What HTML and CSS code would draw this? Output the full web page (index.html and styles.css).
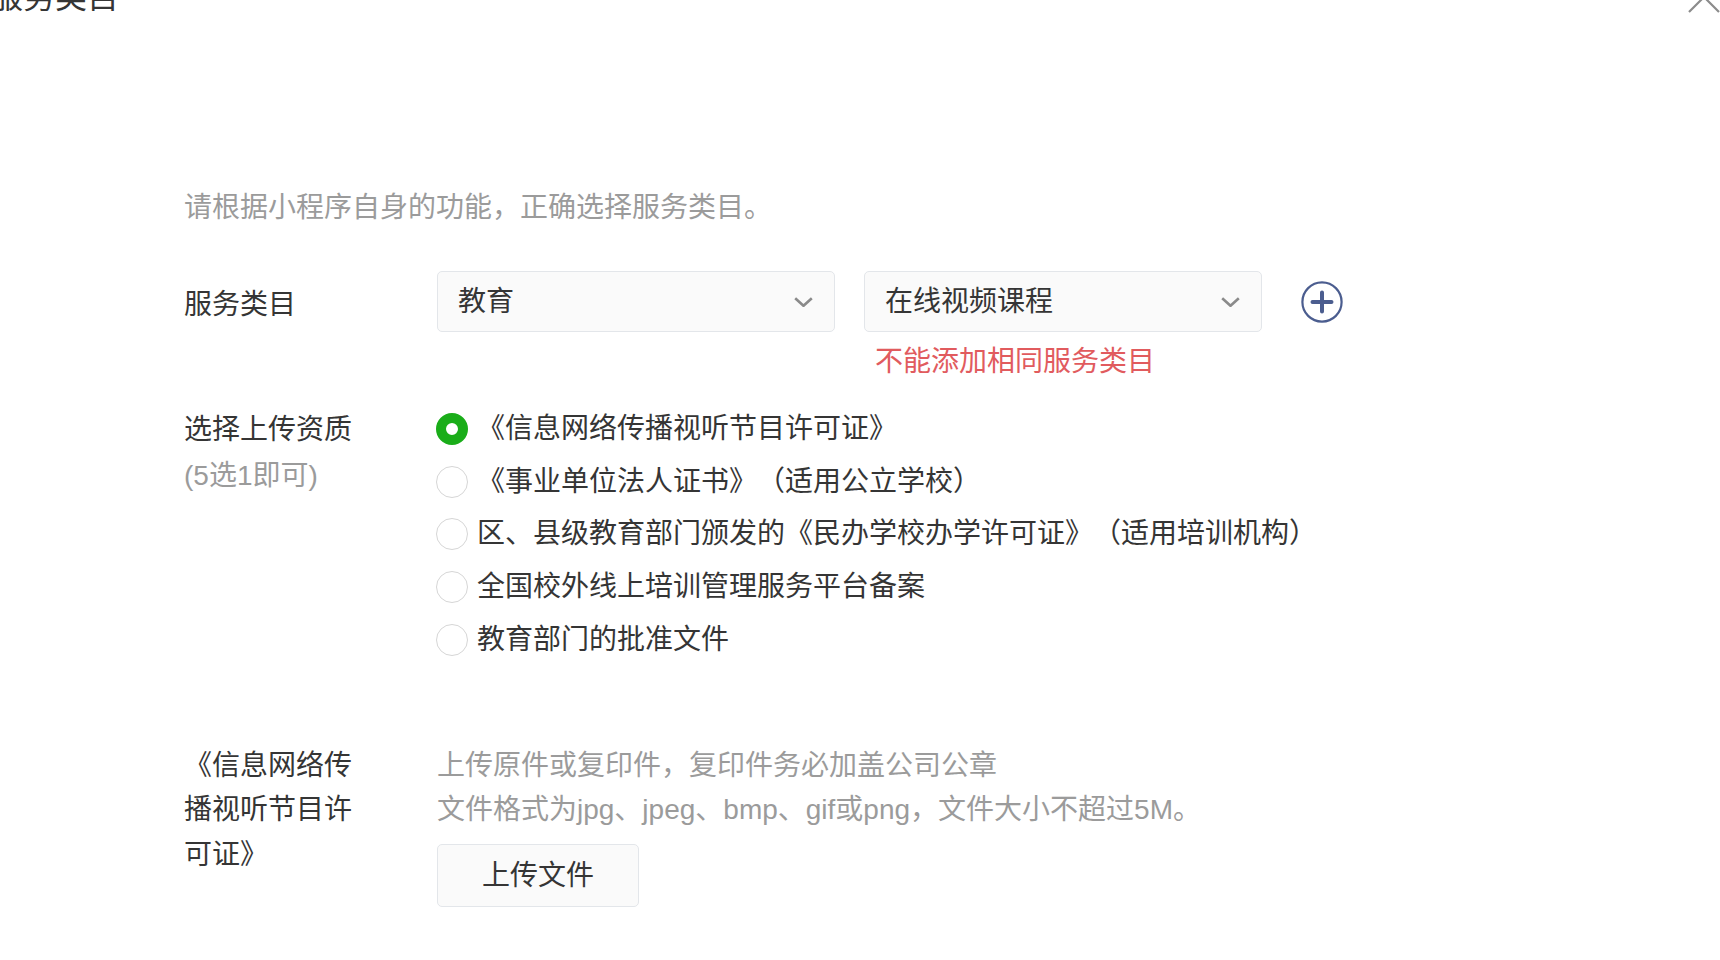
FILE: index.html
```html
<!DOCTYPE html>
<html lang="zh-CN">
<head>
<meta charset="utf-8">
<title>服务类目</title>
<link rel="stylesheet" href="styles.css">
</head>
<body>
<div class="dialog">
  <header class="dialog-hd">
    <h2 class="dialog-title">服务类目</h2>
    <button class="dialog-close" aria-label="关闭">
      <svg viewBox="0 0 32 32" width="32" height="32"><path d="M1 1L31 31M31 1L1 31" stroke="#8c8c8c" stroke-width="2.2" fill="none"/></svg>
    </button>
  </header>
  <main class="dialog-bd">
    <p class="intro">请根据小程序自身的功能，正确选择服务类目。</p>

    <div class="form-row row-category">
      <div class="form-label">服务类目</div>
      <div class="category-ctrl">
        <div class="select-col">
          <div class="select">
            <span class="select-value">教育</span>
            <svg class="chev" viewBox="0 0 19 10" width="19" height="10"><path d="M1.2 1.2L9.5 8.8L17.8 1.2" stroke="#8a8a8a" stroke-width="2.6" fill="none"/></svg>
          </div>
        </div>
        <div class="select-col">
          <div class="select">
            <span class="select-value">在线视频课程</span>
            <svg class="chev" viewBox="0 0 19 10" width="19" height="10"><path d="M1.2 1.2L9.5 8.8L17.8 1.2" stroke="#8a8a8a" stroke-width="2.6" fill="none"/></svg>
          </div>
          <p class="error">不能添加相同服务类目</p>
        </div>
        <button class="add-btn" aria-label="添加">
          <svg viewBox="0 0 42 42" width="42" height="42"><circle cx="21" cy="21" r="19.6" stroke="#4b5d8f" stroke-width="2.2" fill="none"/><path d="M11.5 21H30.5M21 11.5V30.5" stroke="#4b5d8f" stroke-width="4" stroke-linecap="round"/></svg>
        </button>
      </div>
    </div>

    <div class="form-row row-qual">
      <div class="form-label qual-label">
        <div>选择上传资质</div>
        <div class="sub">(5选1即可)</div>
      </div>
      <ul class="radio-list">
        <li class="radio-item is-checked"><span class="radio"></span><span class="radio-text">《信息网络传播视听节目许可证》</span></li>
        <li class="radio-item"><span class="radio"></span><span class="radio-text">《事业单位法人证书》（适用公立学校）</span></li>
        <li class="radio-item"><span class="radio"></span><span class="radio-text">区、县级教育部门颁发的《民办学校办学许可证》（适用培训机构）</span></li>
        <li class="radio-item"><span class="radio"></span><span class="radio-text">全国校外线上培训管理服务平台备案</span></li>
        <li class="radio-item"><span class="radio"></span><span class="radio-text">教育部门的批准文件</span></li>
      </ul>
    </div>

    <div class="form-row row-upload">
      <div class="form-label upload-label">《信息网络传播视听节目许可证》</div>
      <div class="upload-ctrl">
        <p class="tip">上传原件或复印件，复印件务必加盖公司公章</p>
        <p class="tip">文件格式为jpg、jpeg、bmp、gif或png，文件大小不超过5M。</p>
        <button class="upload-btn">上传文件</button>
      </div>
    </div>
  </main>
</div>
</body>
</html>
```

FILE: styles.css
```css
* {
  box-sizing: border-box;
}

html, body {
  margin: 0;
  padding: 0;
  background: #ffffff;
  overflow: hidden;
}

body {
  font-family: "Liberation Sans", "Noto Sans CJK SC", sans-serif;
  font-size: 28px;
  color: #353535;
  text-spacing-trim: space-all;
}

p, h2, ul {
  margin: 0;
  padding: 0;
}

button {
  font: inherit;
  color: inherit;
  background: none;
  border: 0;
  padding: 0;
  cursor: pointer;
  text-spacing-trim: space-all;
}

.dialog {
  width: 1720px;
  height: 960px;
}

/* header */
.dialog-hd {
  display: flex;
  justify-content: space-between;
  align-items: flex-start;
  height: 32px;
  margin-top: -19px;
}

.dialog-title {
  font-size: 32px;
  line-height: 32px;
  font-weight: normal;
  color: #353535;
  margin-left: -9px;
}

.dialog-close {
  display: block;
  width: 32px;
  height: 32px;
  margin-right: 0;
}

.dialog-close svg {
  display: block;
}

/* body */
.dialog-bd {
  padding-left: 184px;
}

.intro {
  margin-top: 175px;
  line-height: 40px;
  color: #9b9b9b;
}

.form-row {
  display: flex;
  align-items: flex-start;
}

.form-label {
  width: 253px;
  flex: none;
  color: #353535;
}

/* category row */
.row-category {
  margin-top: 43px;
}

.row-category .form-label {
  line-height: 61px;
  padding-top: 3px;
}

.category-ctrl {
  display: flex;
  align-items: flex-start;
  gap: 29px;
}

.select-col {
  width: 398px;
}

.select {
  height: 61px;
  display: flex;
  align-items: center;
  justify-content: space-between;
  padding: 0 21px 0 20px;
  background: #fafafa;
  border: 1.5px solid #e3e6ea;
  border-radius: 5px;
  line-height: 40px;
}

.chev {
  display: block;
  flex: none;
}

.error {
  margin-top: 10px;
  padding-left: 11px;
  line-height: 40px;
  color: #e15b5e;
}

.add-btn {
  display: block;
  width: 42px;
  height: 42px;
  margin-top: 10px;
  margin-left: 10px;
}

.add-btn svg {
  display: block;
}

/* qualification row */
.row-qual {
  margin-top: 21px;
}

.qual-label {
  padding-top: 4px;
  line-height: 46px;
}

.qual-label .sub {
  color: #9b9b9b;
}

.radio-list {
  list-style: none;
}

.radio-item {
  display: flex;
  align-items: center;
  height: 52.6px;
  line-height: 40px;
}

.radio {
  width: 32px;
  height: 32px;
  flex: none;
  border-radius: 50%;
  border: 1.5px solid #d6d6d6;
  background: #fff;
  margin-left: -1px;
  margin-right: 9px;
}

.radio-item.is-checked .radio {
  border: 10px solid #1aad19;
}

/* upload row */
.row-upload {
  margin-top: 78px;
}

.upload-label {
  width: 180px;
  margin-right: 73px;
  line-height: 44.5px;
}

.upload-ctrl {
  display: flex;
  flex-direction: column;
  align-items: flex-start;
}

.tip {
  line-height: 44.5px;
  color: #9b9b9b;
}

.upload-btn {
  margin-top: 11px;
  width: 202px;
  height: 63px;
  padding-top: 2px;
  background: #fafafa;
  border: 1.5px solid #e3e6ea;
  border-radius: 5px;
  color: #353535;
  line-height: 40px;
  text-align: center;
}
```
